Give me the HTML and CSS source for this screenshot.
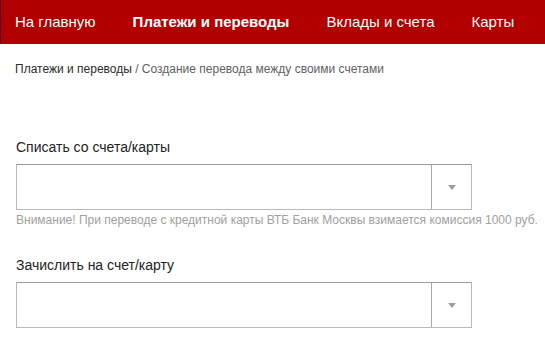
FILE: index.html
```
<!DOCTYPE html>
<html lang="ru">
<head>
<meta charset="utf-8">
<link rel="stylesheet" href="styles.css">
</head>
<body>
<nav class="topnav">
  <a class="nav-item">На главную</a>
  <a class="nav-item active">Платежи и переводы</a>
  <a class="nav-item">Вклады и счета</a>
  <a class="nav-item">Карты</a>
</nav>
<div class="crumbs"><span class="crumb-link">Платежи и переводы</span> / Создание перевода между своими счетами</div>
<main class="form">
  <div class="field-label first">Списать со счета/карты</div>
  <div class="select">
    <div class="select-value"></div>
    <div class="select-arrow"><span class="tri"></span></div>
  </div>
  <div class="hint">Внимание! При переводе с кредитной карты ВТБ Банк Москвы взимается комиссия 1000 руб.</div>
  <div class="field-label second">Зачислить на счет/карту</div>
  <div class="select">
    <div class="select-value"></div>
    <div class="select-arrow"><span class="tri"></span></div>
  </div>
</main>
</body>
</html>
```
FILE: styles.css
```
html, body {
  margin: 0;
  padding: 0;
  background: #fff;
  font-family: "Liberation Sans", Arial, sans-serif;
  overflow: hidden;
}
.topnav {
  height: 44px;
  background: #b20000;
  border-left: 1px solid #5a0c2e;
  display: flex;
  gap: 37px;
  padding-left: 14px;
  box-sizing: border-box;
  white-space: nowrap;
}
.nav-item {
  color: #fff;
  font-size: 15px;
  line-height: 44px;
}
.nav-item.active {
  font-weight: bold;
}
.crumbs {
  margin-top: 18px;
  padding-left: 15px;
  font-size: 12px;
  line-height: 14px;
  color: #5f5f5f;
  white-space: nowrap;
}
.crumb-link {
  color: #2b2b2b;
}
.form {
  padding-left: 16px;
}
.field-label {
  font-size: 14px;
  line-height: 16px;
  color: #222;
}
.field-label.first {
  margin-top: 63px;
}
.field-label.second {
  margin-top: 30px;
}
.select {
  margin-top: 9px;
  width: 456px;
  height: 46px;
  box-sizing: border-box;
  border: 1px solid #b9b9b9;
  border-top-color: #9a9a9a;
  display: flex;
}
.select-value {
  flex: 1;
}
.select-arrow {
  width: 39px;
  border-left: 1px solid #a9a9a9;
  display: flex;
  align-items: center;
  justify-content: center;
}
.tri {
  width: 0;
  height: 0;
  border-left: 4px solid transparent;
  border-right: 4px solid transparent;
  border-top: 5px solid #9e9e9e;
}
.hint {
  margin-top: 3px;
  font-size: 12px;
  line-height: 14px;
  color: #a0a0a0;
  white-space: nowrap;
}
```
